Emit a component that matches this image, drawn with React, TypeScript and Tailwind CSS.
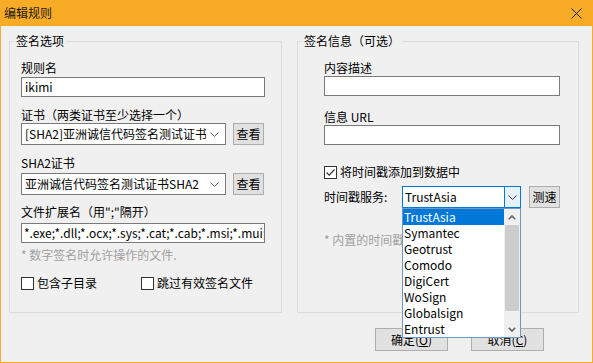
import React from 'react';

const Chevron = ({ color = '#606060' }: { color?: string }) => (
  <svg width="9" height="5" viewBox="0 0 9 5">
    <polyline points="0.5,0.5 4.5,4.5 8.5,0.5" fill="none" stroke={color} strokeWidth="1" />
  </svg>
);

const ScrollArrow = ({ up }: { up?: boolean }) => (
  <svg width="8" height="5" viewBox="0 0 8 5">
    <polyline
      points={up ? '0.8,4.2 4,1 7.2,4.2' : '0.8,0.8 4,4 7.2,0.8'}
      fill="none"
      stroke="#606060"
      strokeWidth="1.6"
    />
  </svg>
);

const CheckBox = ({ checked, label }: { checked?: boolean; label: string }) => (
  <div className="flex items-center h-[16px] gap-[3px]">
    <div className="w-[13px] h-[13px] border border-[#333333] bg-white flex items-center justify-center">
      {checked && (
        <svg width="11" height="11" viewBox="0 0 11 11">
          <polyline points="1.5,5.5 4.2,8.2 9.5,2.5" fill="none" stroke="#333333" strokeWidth="1.2" />
        </svg>
      )}
    </div>
    <span className="text-[12px] leading-[16px]">{label}</span>
  </div>
);

const ViewButton = ({ text }: { text: string }) => (
  <button className="shrink-0 w-[31px] h-[22px] border border-[#adadad] bg-[#e1e1e1] text-[12px] leading-[20px] flex items-center justify-center">
    {text}
  </button>
);

const services = ['TrustAsia', 'Symantec', 'Geotrust', 'Comodo', 'DigiCert', 'WoSign', 'Globalsign', 'Entrust'];

export default function App() {
  return (
    <div className="w-[593px] h-[363px] flex flex-col bg-[#f0f0f0] border-x border-b border-[#f8ab25] text-black font-['Noto_Sans_CJK_SC','Noto_Sans',sans-serif] overflow-hidden">
      {/* title bar */}
      <div className="h-[26px] shrink-0 bg-[#f8ab25] flex items-center justify-between pl-[3px] pr-[10px]">
        <span className="text-[12px] leading-[16px] text-[#1a1a1a]">编辑规则</span>
        <svg width="11" height="11" viewBox="0 0 11 11">
          <line x1="0.5" y1="0.5" x2="10.5" y2="10.5" stroke="#1a1a1a" strokeWidth="1" />
          <line x1="10.5" y1="0.5" x2="0.5" y2="10.5" stroke="#1a1a1a" strokeWidth="1" />
        </svg>
      </div>

      <div className="flex-1 flex flex-col px-[8px] pt-[8px]">
        <div className="flex gap-[15px]">
          {/* left group */}
          <fieldset className="min-w-0 shrink-0 w-[273px] h-[279px] border border-[#dcdcdc]">
            <legend className="ml-[4px] px-[2px] text-[12px] leading-[14px]">签名选项</legend>
            <div className="pl-[11px] pr-[16px] flex flex-col">
              <div className="mt-[12px] text-[12px] leading-[16px]">规则名</div>
              <div className="mt-[1px] h-[20px] border border-[#7a7a7a] bg-white px-[3px] text-[12px] leading-[18px]">ikimi</div>

              <div className="mt-[10px] text-[12px] leading-[16px]">证书（两类证书至少选择一个）</div>
              <div className="flex gap-[7px]">
                <div className="w-[205px] h-[22px] border border-[#7a7a7a] bg-white flex items-center pl-[3px] pr-[6px] gap-[4px]">
                  <span className="flex-1 min-w-0 overflow-hidden whitespace-nowrap text-[12px] leading-[18px]">[SHA2]亚洲诚信代码签名测试证书SHA2</span>
                  <Chevron />
                </div>
                <ViewButton text="查看" />
              </div>

              <div className="mt-[10px] text-[12px] leading-[16px]">SHA2证书</div>
              <div className="mt-[2px] flex gap-[7px]">
                <div className="w-[205px] h-[22px] border border-[#7a7a7a] bg-white flex items-center pl-[3px] pr-[6px] gap-[4px]">
                  <span className="flex-1 min-w-0 overflow-hidden whitespace-nowrap text-[12px] leading-[18px]">亚洲诚信代码签名测试证书SHA2</span>
                  <Chevron />
                </div>
                <ViewButton text="查看" />
              </div>

              <div className="mt-[9px] text-[12px] leading-[16px]">文件扩展名（用";"隔开）</div>
              <div className="mt-[3px] h-[20px] border border-[#7a7a7a] bg-white px-[2px] text-[12px] leading-[18px] overflow-hidden whitespace-nowrap">
                *.exe;*.dll;*.ocx;*.sys;*.cat;*.cab;*.msi;*.mui;*.ps1
              </div>

              <div className="mt-[4px] text-[12px] leading-[16px] text-[#a0a0a0]">* 数字签名时允许操作的文件.</div>

              <div className="mt-[12px] flex">
                <div className="w-[120px]">
                  <CheckBox label="包含子目录" />
                </div>
                <CheckBox label="跳过有效签名文件" />
              </div>
            </div>
          </fieldset>

          {/* right group */}
          <fieldset className="min-w-0 shrink-0 w-[282px] h-[279px] border border-[#dcdcdc]">
            <legend className="ml-[4px] px-[2px] text-[12px] leading-[14px]">签名信息（可选）</legend>
            <div className="pl-[26px] pr-[18px] flex flex-col">
              <div className="mt-[12px] text-[12px] leading-[16px]">内容描述</div>
              <div className="h-[20px] border border-[#7a7a7a] bg-white" />

              <div className="mt-[13px] text-[12px] leading-[16px]">信息 URL</div>
              <div className="h-[20px] border border-[#7a7a7a] bg-white" />

              <div className="mt-[19px]">
                <CheckBox checked label="将时间戳添加到数据中" />
              </div>

              <div className="mt-[6px] flex items-center">
                <span className="w-[78px] shrink-0 text-[12px] leading-[16px]">时间戳服务:</span>
                <div className="relative shrink-0 w-[119px] h-[22px]">
                  <div className="h-full border border-[#0078d7] bg-white flex">
                    <span className="flex-1 pl-[2px] text-[12px] leading-[20px]">TrustAsia</span>
                    <div className="w-[16px] border-l border-[#0078d7] bg-[#e5f1fb] flex items-center justify-center">
                      <Chevron color="#333333" />
                    </div>
                  </div>
                  {/* open drop-down list */}
                  <div className="absolute left-0 top-[22px] z-10 w-[119px] h-[130px] border border-[#6e98c4] bg-white flex">
                    <div className="flex-1 flex flex-col">
                      {services.map((s, i) => (
                        <div
                          key={s}
                          className={
                            i === 0
                              ? 'h-[16px] pl-[1px] text-[12px] leading-[16px] bg-[#0078d7] text-white'
                              : 'h-[16px] pl-[1px] text-[12px] leading-[16px]'
                          }
                        >
                          {s}
                        </div>
                      ))}
                    </div>
                    <div className="w-[16px] bg-[#f0f0f0] flex flex-col">
                      <div className="h-[16px] flex items-center justify-center">
                        <ScrollArrow up />
                      </div>
                      <div className="h-[86px] mx-[1px] bg-[#cdcdcd]" />
                      <div className="flex-1" />
                      <div className="h-[16px] flex items-center justify-center">
                        <ScrollArrow />
                      </div>
                    </div>
                  </div>
                </div>
                <div className="ml-[8px]">
                  <ViewButton text="测速" />
                </div>
              </div>

              <div className="mt-[24px] text-[12px] leading-[16px] text-[#a0a0a0] whitespace-nowrap">* 内置的时间戳服务器列表</div>
            </div>
          </fieldset>
        </div>

        <div className="mt-[15px] flex justify-end gap-[23px] pr-[40px]">
          <button className="w-[73px] h-[23px] border border-[#adadad] bg-[#e1e1e1] text-[12px] leading-[20px]">
            确定(<span className="underline">O</span>)
          </button>
          <button className="w-[73px] h-[23px] border border-[#adadad] bg-[#e1e1e1] text-[12px] leading-[20px]">
            取消(<span className="underline">C</span>)
          </button>
        </div>
      </div>
    </div>
  );
}
